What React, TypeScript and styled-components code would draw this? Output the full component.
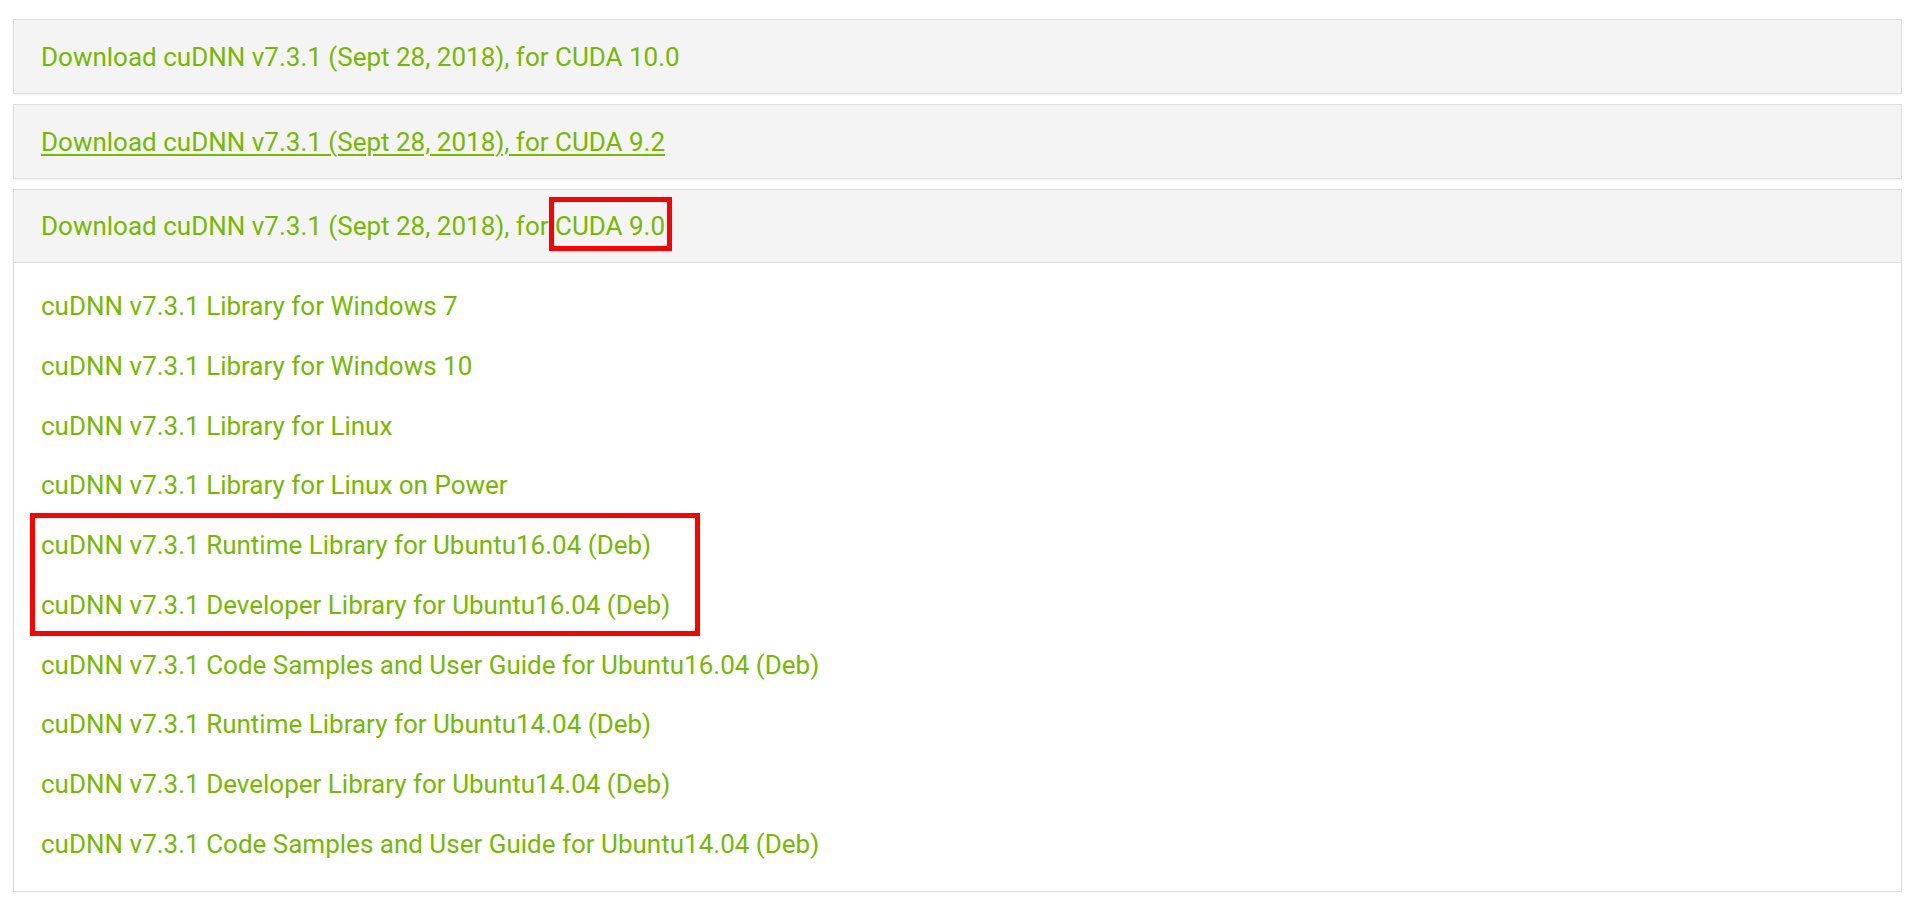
import React from "react";
import styled, { createGlobalStyle, css } from "styled-components";

const GlobalStyle = createGlobalStyle`
  html, body {
    margin: 0;
    padding: 0;
    background: #ffffff;
  }
  body {
    font-family: Roboto, "Liberation Sans", Arial, sans-serif;
  }
`;

const Page = styled.div`
  display: flex;
  flex-direction: column;
  gap: 10px;
  padding: 19px 23px 0 13px;
`;

const Panel = styled.section`
  background: #ffffff;
  border: 1px solid #dedede;
  box-shadow: 0 1px 2px rgba(0, 0, 0, 0.07);
`;

const PanelHeader = styled.div<{ $open?: boolean }>`
  box-sizing: border-box;
  height: 73px;
  display: flex;
  align-items: center;
  padding: 0 27px;
  background: #f4f4f4;
  ${(p) =>
    p.$open &&
    css`
      border-bottom: 1px solid #dedede;
    `}
`;

const LinkText = styled.a<{ $underline?: boolean }>`
  color: #76b900;
  font-size: 26px;
  font-weight: 400;
  text-decoration: ${(p) => (p.$underline ? "underline" : "none")};
  text-decoration-thickness: 2px;
  text-underline-offset: 3px;
  cursor: pointer;
`;

const Highlight = styled.span`
  position: relative;
  &::after {
    content: "";
    position: absolute;
    top: -14px;
    bottom: -10px;
    left: -6px;
    right: -7px;
    border: 5px solid #ff0000;
    pointer-events: none;
  }
`;

const PanelBody = styled.div`
  display: flex;
  flex-direction: column;
  align-items: flex-start;
  padding: 14px 27px 16px;
`;

const Item = styled.div`
  line-height: 59.75px;
  height: 59.75px;
  white-space: nowrap;
`;

const ItemGroup = styled.div`
  position: relative;
  display: flex;
  flex-direction: column;
  &::after {
    content: "";
    position: absolute;
    top: -3px;
    bottom: 0px;
    left: -11px;
    right: -30px;
    border: 5px solid #ff0000;
    pointer-events: none;
  }
`;

const before = [
  "cuDNN v7.3.1 Library for Windows 7",
  "cuDNN v7.3.1 Library for Windows 10",
  "cuDNN v7.3.1 Library for Linux",
  "cuDNN v7.3.1 Library for Linux on Power",
];

const highlighted = [
  "cuDNN v7.3.1 Runtime Library for Ubuntu16.04 (Deb)",
  "cuDNN v7.3.1 Developer Library for Ubuntu16.04 (Deb)",
];

const after = [
  "cuDNN v7.3.1 Code Samples and User Guide for Ubuntu16.04 (Deb)",
  "cuDNN v7.3.1 Runtime Library for Ubuntu14.04 (Deb)",
  "cuDNN v7.3.1 Developer Library for Ubuntu14.04 (Deb)",
  "cuDNN v7.3.1 Code Samples and User Guide for Ubuntu14.04 (Deb)",
];

const renderItems = (list: string[]) =>
  list.map((t) => (
    <Item key={t}>
      <LinkText>{t}</LinkText>
    </Item>
  ));

export default function App() {
  return (
    <>
      <GlobalStyle />
      <Page>
        <Panel>
          <PanelHeader>
            <LinkText>Download cuDNN v7.3.1 (Sept 28, 2018), for CUDA 10.0</LinkText>
          </PanelHeader>
        </Panel>
        <Panel>
          <PanelHeader>
            <LinkText $underline>Download cuDNN v7.3.1 (Sept 28, 2018), for CUDA 9.2</LinkText>
          </PanelHeader>
        </Panel>
        <Panel>
          <PanelHeader $open>
            <LinkText>
              Download cuDNN v7.3.1 (Sept 28, 2018), for <Highlight>CUDA 9.0</Highlight>
            </LinkText>
          </PanelHeader>
          <PanelBody>
            {renderItems(before)}
            <ItemGroup>{renderItems(highlighted)}</ItemGroup>
            {renderItems(after)}
          </PanelBody>
        </Panel>
      </Page>
    </>
  );
}
